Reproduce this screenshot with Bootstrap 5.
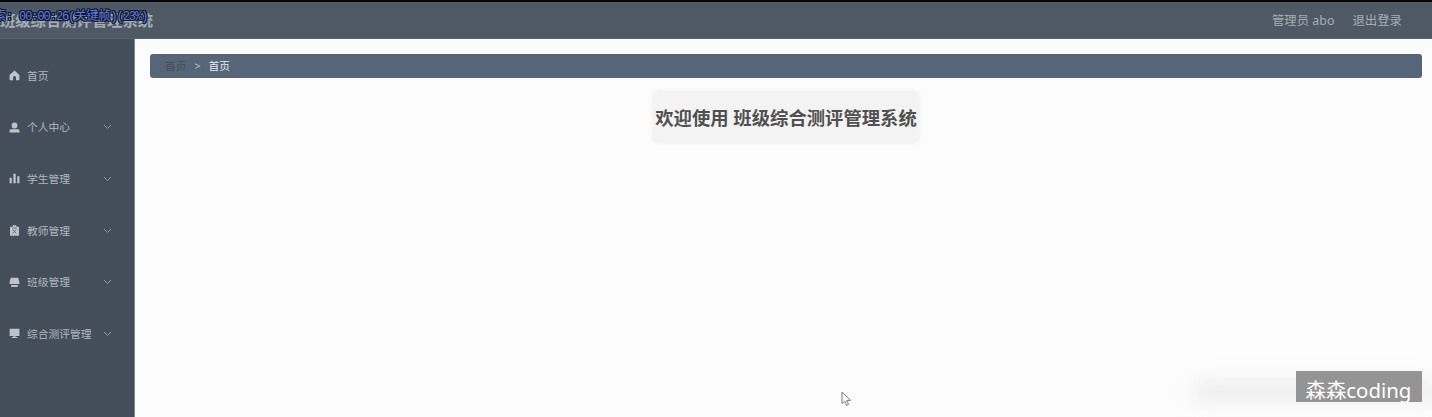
<!DOCTYPE html>
<html lang="zh-CN">
<head>
<meta charset="utf-8">
<meta name="viewport" content="width=device-width, initial-scale=1">
<title>班级综合测评管理系统</title>
<link href="https://cdn.jsdelivr.net/npm/bootstrap@5.3.0/dist/css/bootstrap.min.css" rel="stylesheet">
<style>
body{height:417px;overflow:hidden;background:#fcfcfc;font-family:"Noto Sans","Noto Sans CJK SC",sans-serif;font-size:10.75px;line-height:1.4}
.topbar{height:39px;background:#4e5965;border-top:2px solid #06080a;border-bottom:1px solid #59626d;color:#a6adb6}
.brand-name{font-size:15.3px;font-weight:700;line-height:20px;color:#a5adb6;white-space:nowrap}
.account{font-size:12.4px;gap:18px;padding-right:30px;padding-top:1px}
.side{width:135px;background:#444e5a;border-right:1px solid #7d858d;padding-top:11px}
.side-item{height:51.6px;padding-left:9px;color:#b2b8bf;white-space:nowrap}
.side-item .ico{width:11px;height:11px;margin-right:7px;fill:#bec3c9}
.side-item span{padding-top:1px}
.side-item .chev{position:absolute;left:103px;width:9px;height:6px;fill:none;stroke:#929aa3;stroke-width:1}
.main-area{padding:15px 10px 0 15px}
.crumbs{height:24px;background:#566577;border-radius:3px;padding:1px 0 0 15px;color:#e6e9ec}
.crumbs .from{color:#484d52}
.crumbs .sep{width:22px;text-align:center;color:#bec5cc}
.welcome{margin:13px auto 0;padding-top:2px;width:266px;height:52px;background:#f3f3f3;border-radius:6px;box-shadow:0 0 4px #eee;color:#505050;font-size:18.35px;font-weight:700;white-space:nowrap}
.osd{left:-6px;top:9px;font:12px/16px "Liberation Mono","Noto Sans CJK SC",monospace;letter-spacing:-1.05px;color:#5c7cf0;white-space:nowrap;text-shadow:1px 0 #141823,-1px 0 #141823,0 1px #141823,0 -1px #141823,1px 1px #141823,-1px -1px #141823,1px -1px #141823,-1px 1px #141823}
.osd b{font-weight:400;letter-spacing:0}
.osd .lead-in{display:inline-block;width:25px}
.smudge{left:1196px;top:381px;width:240px;height:20px;background:#ededed;filter:blur(9px)}
.tag{left:1296px;top:371px;width:126px;height:31px;background:#949494;color:#fff;font-size:20.4px;line-height:39px;overflow:hidden;white-space:nowrap;padding-left:9.5px}
.pointer{left:841px;top:391px}
</style>
<script src="https://cdn.jsdelivr.net/npm/bootstrap@5.3.0/dist/js/bootstrap.bundle.min.js"></script>
</head>
<body class="d-flex flex-column position-relative">
<header class="topbar d-flex align-items-center justify-content-between flex-shrink-0">
  <div class="brand-name">班级综合测评管理系统</div>
  <div class="account d-flex"><span>管理员 abo</span><span>退出登录</span></div>
</header>
<div class="d-flex flex-grow-1">
  <nav class="side flex-shrink-0">
    <div class="side-item d-flex align-items-center position-relative"><svg class="ico" viewBox="0 0 11 11"><path d="M5.5.6 10.4 5v4.4q0 .8-.8.8H7V7.5a1.5 1.5 0 0 0-3 0v2.7H1.4q-.8 0-.8-.8V5z"/></svg><span>首页</span></div>
    <div class="side-item d-flex align-items-center position-relative"><svg class="ico" viewBox="0 0 11 11"><rect x="2.7" y=".4" width="5.6" height="6" rx="2.6"/><path d="M.5 10.4V8.8q0-1.5 1.5-1.5h7q1.5 0 1.5 1.5v1.6z"/></svg><span>个人中心</span><svg class="chev" viewBox="0 0 9 6"><path d="m1 1 3.5 3.5L8 1"/></svg></div>
    <div class="side-item d-flex align-items-center position-relative"><svg class="ico" viewBox="0 0 11 11"><path d="M.6 4.7h2.2v5.6H.6zM4.4.8h2.3v9.5H4.4zM8.2 3.3h2.2v7H8.2z"/></svg><span>学生管理</span><svg class="chev" viewBox="0 0 9 6"><path d="m1 1 3.5 3.5L8 1"/></svg></div>
    <div class="side-item d-flex align-items-center position-relative"><svg class="ico" viewBox="0 0 11 11"><path d="M1 1.7h2.7V.2h3.6v1.5H10v9H1z"/><path d="m3.7 4.5 3.6 3.9m0-3.9L3.7 8.4M3.3 3h4.4" fill="none" stroke="#555f6b" stroke-width=".8"/></svg><span>教师管理</span><svg class="chev" viewBox="0 0 9 6"><path d="m1 1 3.5 3.5L8 1"/></svg></div>
    <div class="side-item d-flex align-items-center position-relative"><svg class="ico" viewBox="0 0 11 11"><path d="M1.8.8h7.4l1.2 4v2.3H.6V4.8zM2.2 8h6.6v1.9H2.2z"/></svg><span>班级管理</span><svg class="chev" viewBox="0 0 9 6"><path d="m1 1 3.5 3.5L8 1"/></svg></div>
    <div class="side-item d-flex align-items-center position-relative"><svg class="ico" viewBox="0 0 11 11"><path d="M.6.8h9.8v7.1H.6zM4.6 7.9h1.8V9h1.8v.9H2.8V9h1.8z"/></svg><span>综合测评管理</span><svg class="chev" viewBox="0 0 9 6"><path d="m1 1 3.5 3.5L8 1"/></svg></div>
  </nav>
  <main class="main-area flex-grow-1">
    <div class="crumbs d-flex align-items-center"><span class="from">首页</span><span class="sep">&gt;</span><span>首页</span></div>
    <div class="welcome d-flex align-items-center justify-content-center">欢迎使用 班级综合测评管理系统</div>
  </main>
</div>
<div class="osd position-absolute"><b class="lead-in">索:</b>00:00:26(<b>关键帧</b>)(23%)</div>
<div class="smudge position-absolute"></div>
<div class="tag position-absolute">森森coding</div>
<svg class="pointer position-absolute" width="11" height="16" viewBox="0 0 11 16"><path d="M1 1v11.5l2.8-2.4 1.8 4.3 2-.9-1.8-4.1h3.7z" fill="#fff" stroke="#777" stroke-width="1"/></svg>
</body>
</html>
